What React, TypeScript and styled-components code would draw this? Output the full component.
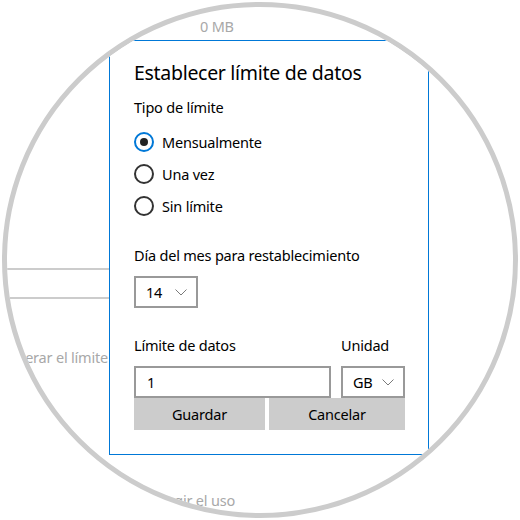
import React from "react";
import styled, { createGlobalStyle } from "styled-components";

const Global = createGlobalStyle`
  html, body {
    margin: 0;
    padding: 0;
    background: #ffffff;
  }
  * {
    box-sizing: border-box;
  }
`;

const Page = styled.div`
  width: 520px;
  height: 520px;
  background: #ffffff;
  font-family: "Noto Sans", "Open Sans", sans-serif;
  overflow: hidden;
`;

const Lens = styled.div`
  position: relative;
  width: 516px;
  height: 516px;
  margin: 2px;
  border-radius: 50%;
  border: 5px solid #cccccc;
  overflow: hidden;
  background: #ffffff;
`;

const Backdrop = styled.div`
  display: flex;
  flex-direction: column;
  font-size: 14.5px;
  letter-spacing: -0.2px;
  line-height: 20px;
  color: #a8a8a8;
`;

const Usage = styled.div`
  margin: 9px 0 0 193px;
`;

const Field = styled.div`
  margin-top: 232px;
  width: 240px;
  height: 31px;
  border-top: 2px solid #cccccc;
  border-bottom: 2px solid #cccccc;
`;

const Trailing = styled.div<{ $top: number; $end: number }>`
  display: flex;
  justify-content: flex-end;
  white-space: nowrap;
  margin-top: ${(p) => p.$top}px;
  width: ${(p) => p.$end}px;
`;

const Dialog = styled.div`
  position: absolute;
  left: 102px;
  top: 33px;
  width: 320px;
  height: 415px;
  background: #ffffff;
  border: 1px solid #0078d7;
  padding: 18px 23px 0 24px;
  display: flex;
  flex-direction: column;
  color: #000000;
  font-size: 14.5px;
  letter-spacing: -0.2px;
  line-height: 20px;
`;

const Title = styled.div`
  font-size: 19.5px;
  letter-spacing: -0.3px;
  line-height: 28px;
`;

const Label = styled.div<{ $gap: number }>`
  margin-top: ${(p) => p.$gap}px;
`;

const RadioGroup = styled.div`
  margin-top: 9px;
  display: flex;
  flex-direction: column;
`;

const RadioRow = styled.div`
  height: 32px;
  display: flex;
  align-items: center;
  gap: 8px;
`;

const Dot = styled.span<{ $checked?: boolean }>`
  width: 20px;
  height: 20px;
  border-radius: 50%;
  border: 2px solid ${(p) => (p.$checked ? "#0078d7" : "#333333")};
  display: flex;
  align-items: center;
  justify-content: center;
  flex: none;
  &::after {
    content: "";
    width: 8px;
    height: 8px;
    border-radius: 50%;
    background: ${(p) => (p.$checked ? "#222222" : "transparent")};
  }
`;

const Select = styled.div<{ $width: number }>`
  width: ${(p) => p.$width}px;
  height: 32px;
  border: 2px solid #999999;
  display: flex;
  align-items: center;
  justify-content: space-between;
  padding: 0 9px 0 10px;
`;

const SelectRow = styled.div`
  margin-top: 11px;
`;

const LimitLabels = styled.div`
  margin-top: 27px;
  display: grid;
  grid-template-columns: 1fr 64px;
  column-gap: 10px;
`;

const LimitInputs = styled.div`
  margin-top: 11px;
  display: grid;
  grid-template-columns: 1fr 64px;
  column-gap: 10px;
`;

const TextBox = styled.div`
  height: 32px;
  border: 2px solid #999999;
  display: flex;
  align-items: center;
  padding: 0 11px;
`;

const Buttons = styled.div`
  display: grid;
  grid-template-columns: 131px 1fr;
  column-gap: 4px;
`;

const Button = styled.div`
  height: 32px;
  background: #cccccc;
  display: flex;
  align-items: center;
  justify-content: center;
`;

const Chevron = () => (
  <svg width="12" height="7" viewBox="0 0 12 7">
    <polyline points="0.5,0.5 6,6 11.5,0.5" fill="none" stroke="#7a7a7a" strokeWidth="1" />
  </svg>
);

const options = [
  { label: "Mensualmente", checked: true },
  { label: "Una vez", checked: false },
  { label: "Sin límite", checked: false },
];

export default function App() {
  return (
    <Page>
      <Global />
      <Lens>
        <Backdrop>
          <Usage>0 MB</Usage>
          <Field />
          <Trailing $top={48} $end={101}>
            Superar el límite
          </Trailing>
          <Trailing $top={123} $end={228}>
            Restringir el uso
          </Trailing>
        </Backdrop>
        <Dialog>
          <Title>Establecer límite de datos</Title>
          <Label $gap={10}>Tipo de límite</Label>
          <RadioGroup>
            {options.map((o) => (
              <RadioRow key={o.label}>
                <Dot $checked={o.checked} />
                <span>{o.label}</span>
              </RadioRow>
            ))}
          </RadioGroup>
          <Label $gap={23}>Día del mes para restablecimiento</Label>
          <SelectRow>
            <Select $width={64}>
              <span>14</span>
              <Chevron />
            </Select>
          </SelectRow>
          <LimitLabels>
            <span>Límite de datos</span>
            <span>Unidad</span>
          </LimitLabels>
          <LimitInputs>
            <TextBox>1</TextBox>
            <Select $width={64}>
              <span>GB</span>
              <Chevron />
            </Select>
          </LimitInputs>
          <Buttons>
            <Button>Guardar</Button>
            <Button>Cancelar</Button>
          </Buttons>
        </Dialog>
      </Lens>
    </Page>
  );
}
